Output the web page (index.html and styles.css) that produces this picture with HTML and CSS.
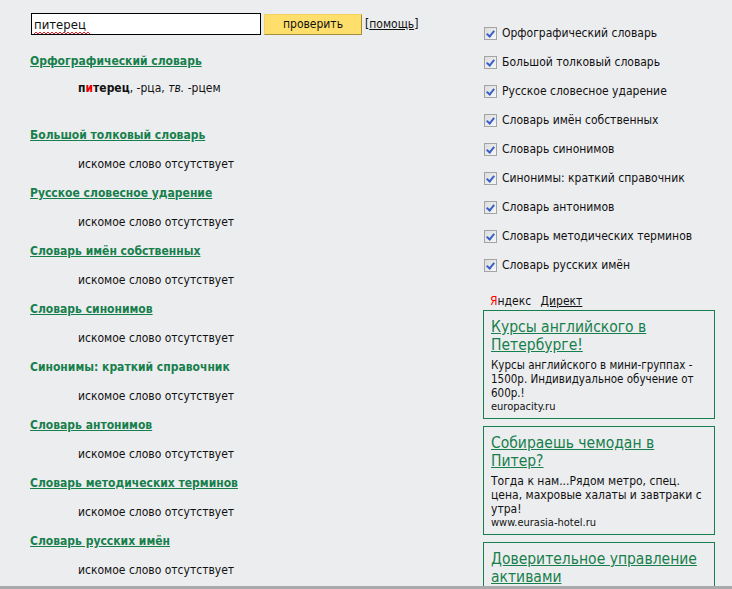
FILE: index.html
```html
<!DOCTYPE html>
<html lang="ru">
<head>
  <meta charset="UTF-8" />
  <title>Проверка слова</title>
  <link rel="stylesheet" href="styles.css">
</head>
<body>
  <div class="page">
    <div class="main">
      <form class="search">
        <span class="field">
          <input type="text" class="word" value="питерец">
          <svg class="squiggle" width="56" height="4" viewBox="0 0 56 4"><path d="M0 3 L2 1 L4 3 L6 1 L8 3 L10 1 L12 3 L14 1 L16 3 L18 1 L20 3 L22 1 L24 3 L26 1 L28 3 L30 1 L32 3 L34 1 L36 3 L38 1 L40 3 L42 1 L44 3 L46 1 L48 3 L50 1 L52 3 L54 1 L56 3" fill="none" stroke="#e4222b" stroke-width="1"/></svg>
        </span>
        <button type="button" class="check">проверить</button>
        <span class="help">[<a href="#">помощь</a>]</span>
      </form>

      <div class="dict">
        <a class="title" href="#">Орфографический словарь</a>
        <div class="result first"><b>п<span class="stress">и</span>терец</b>, -рца, <i>тв.</i> -рцем</div>
      </div>
      <div class="dict">
        <a class="title" href="#">Большой толковый словарь</a>
        <div class="result">искомое слово отсутствует</div>
      </div>
      <div class="dict">
        <a class="title" href="#">Русское словесное ударение</a>
        <div class="result">искомое слово отсутствует</div>
      </div>
      <div class="dict">
        <a class="title" href="#">Словарь имён собственных</a>
        <div class="result">искомое слово отсутствует</div>
      </div>
      <div class="dict">
        <a class="title" href="#">Словарь синонимов</a>
        <div class="result">искомое слово отсутствует</div>
      </div>
      <div class="dict">
        <span class="title plain">Синонимы: краткий справочник</span>
        <div class="result">искомое слово отсутствует</div>
      </div>
      <div class="dict">
        <a class="title" href="#">Словарь антонимов</a>
        <div class="result">искомое слово отсутствует</div>
      </div>
      <div class="dict">
        <a class="title" href="#">Словарь методических терминов</a>
        <div class="result">искомое слово отсутствует</div>
      </div>
      <div class="dict">
        <a class="title" href="#">Словарь русских имён</a>
        <div class="result">искомое слово отсутствует</div>
      </div>
    </div>

    <div class="side">
      <ul class="choose">
        <li><label><input type="checkbox" checked> Орфографический словарь</label></li>
        <li><label><input type="checkbox" checked> Большой толковый словарь</label></li>
        <li><label><input type="checkbox" checked> Русское словесное ударение</label></li>
        <li><label><input type="checkbox" checked> Словарь имён собственных</label></li>
        <li><label><input type="checkbox" checked> Словарь синонимов</label></li>
        <li><label><input type="checkbox" checked> Синонимы: краткий справочник</label></li>
        <li><label><input type="checkbox" checked> Словарь антонимов</label></li>
        <li><label><input type="checkbox" checked> Словарь методических терминов</label></li>
        <li><label><input type="checkbox" checked> Словарь русских имён</label></li>
      </ul>

      <div class="direct"><span class="ya"><span class="red">Я</span>ндекс</span> <a href="#">Директ</a></div>

      <div class="ad">
        <a class="ad-title" href="#">Курсы английского в Петербурге!</a>
        <div class="ad-text">Курсы английского в мини-группах - 1500р. Индивидуальное обучение от 600р.!</div>
        <div class="ad-url">europacity.ru</div>
      </div>
      <div class="ad">
        <a class="ad-title" href="#">Собираешь чемодан в Питер?</a>
        <div class="ad-text large">Тогда к нам...Рядом метро, спец. цена, махровые халаты и завтраки с утра!</div>
        <div class="ad-url">www.eurasia-hotel.ru</div>
      </div>
      <div class="ad">
        <a class="ad-title" href="#">Доверительное управление активами</a>
      </div>
    </div>
  </div>
</body>
</html>
```

FILE: styles.css
```css
body {
  margin: 0;
  background: #ecedef;
  font-family: "DejaVu Sans Condensed", "DejaVu Sans", Verdana, sans-serif;
  font-size: 12px;
  color: #111;
  overflow: hidden;
}
.page {
  display: flex;
  height: 586px;
  border-bottom: 3px solid #a9aaac;
  overflow: hidden;
}
.main {
  width: 453px;
  padding: 13px 0 0 30px;
}
.search {
  display: flex;
  align-items: center;
  margin: 0 0 18px 1px;
}
.field {
  position: relative;
  display: block;
  height: 22px;
}
.squiggle {
  position: absolute;
  left: 3px;
  top: 18px;
}
.word {
  width: 224px;
  height: 18px;
  padding: 1px 2px;
  border: 1px solid #000;
  background: #fff;
  font-family: "DejaVu Sans Condensed", "DejaVu Sans", sans-serif;
  font-size: 13px;
  color: #111;
  margin: 0;
  outline: none;
}
.check {
  margin-left: 3px;
  width: 98px;
  height: 21px;
  padding: 0;
  background: #ffdf6b;
  border: 1px solid #f4d25c;
  border-right-color: #a58d3a;
  border-bottom-color: #a58d3a;
  font-family: "DejaVu Sans Condensed", "DejaVu Sans", sans-serif;
  font-size: 12px;
  color: #111;
}
.help {
  margin-left: 3px;
  font-size: 12px;
}
.help a {
  color: #111;
}
.dict {
  margin-bottom: 13px;
}
.title {
  display: block;
  font-weight: bold;
  color: #177f4c;
  height: 16px;
  padding-top: 1px;
}
a.title {
  text-decoration: underline;
}
.result {
  margin: 12px 0 0 48px;
  line-height: 16px;
}
.result.first {
  margin-top: 10px;
  margin-bottom: 31px;
}
.stress {
  color: #e00;
}
.side {
  width: 232px;
  padding-top: 25px;
}
.choose {
  list-style: none;
  margin: 0;
  padding: 0;
}
.choose li {
  height: 29px;
}
.choose label {
  display: flex;
  align-items: center;
  gap: 5px;
  font-size: 12px;
  height: 16px;
}
.choose input {
  appearance: none;
  position: relative;
  width: 13px;
  height: 13px;
  margin: 0 0 0 1px;
  border: 1px solid #a4a4a4;
  background: linear-gradient(135deg, #dcdcdc, #f6f6f6);
}
.choose input:checked::after {
  content: "";
  position: absolute;
  left: 3px;
  top: 1px;
  width: 3px;
  height: 6px;
  border: solid #3a5fc9;
  border-width: 0 2px 2px 0;
  transform: rotate(40deg);
}
.direct {
  margin: 8px 0 2px 7px;
  font-size: 12px;
}
.ya {
  margin-right: 6px;
}
.red {
  color: #f00;
}
.direct a {
  color: #111;
}
.ad {
  border: 1px solid #177f4c;
  padding: 7px 4px 4px 7px;
  margin-bottom: 7px;
}
.ad-title {
  display: block;
  font-size: 15.5px;
  line-height: 18px;
  color: #177f4c;
  margin-bottom: 4px;
}
.ad-text {
  font-size: 11.5px;
  line-height: 14px;
}
.ad-text.large {
  font-size: 12px;
}
.ad-url {
  font-size: 11px;
  line-height: 14px;
}
```
